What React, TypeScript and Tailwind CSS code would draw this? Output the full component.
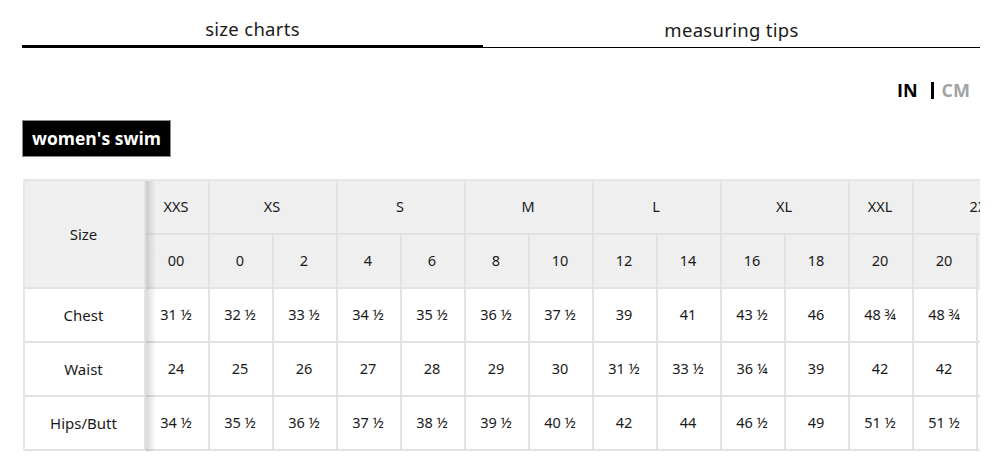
import React from "react";

const groups: { label: string; span: number }[] = [
  { label: "XXS", span: 1 },
  { label: "XS", span: 2 },
  { label: "S", span: 2 },
  { label: "M", span: 2 },
  { label: "L", span: 2 },
  { label: "XL", span: 2 },
  { label: "XXL", span: 1 },
  { label: "2X", span: 2 },
];

const sizes = ["00", "0", "2", "4", "6", "8", "10", "12", "14", "16", "18", "20", "20", ""];

const rows: { label: string; values: string[] }[] = [
  {
    label: "Chest",
    values: ["31 ½", "32 ½", "33 ½", "34 ½", "35 ½", "36 ½", "37 ½", "39", "41", "43 ½", "46", "48 ¾", "48 ¾", ""],
  },
  {
    label: "Waist",
    values: ["24", "25", "26", "27", "28", "29", "30", "31 ½", "33 ½", "36 ¼", "39", "42", "42", ""],
  },
  {
    label: "Hips/Butt",
    values: ["34 ½", "35 ½", "36 ½", "37 ½", "38 ½", "39 ½", "40 ½", "42", "44", "46 ½", "49", "51 ½", "51 ½", ""],
  },
];

const spanClass: Record<number, string> = {
  1: "col-span-1",
  2: "col-span-2",
};

export default function App() {
  return (
    <div className="w-[1000px] h-[473px] bg-white pl-[22px] pr-[20px] font-['Noto_Sans',sans-serif] text-[#1a1a1a] overflow-hidden">
      {/* Tabs */}
      <div className="flex border-b border-black">
        <div className="w-[461px] text-center pt-[17px] pb-[4px] leading-[24px] text-[18.5px] border-b-[3px] border-black -mb-px tracking-[0.3px]">
          size charts
        </div>
        <div className="flex-1 text-center pt-[18px] pb-[5px] leading-[24px] text-[18.5px] tracking-[0.3px]">
          measuring tips
        </div>
      </div>

      {/* Units */}
      <div className="mt-[30px] h-[24px] flex justify-end items-center pr-[10px] font-['Open_Sans',sans-serif] font-bold text-[18px] leading-[24px]">
        <span className="text-black">IN</span>
        <span className="ml-[13px] mr-[8px] w-[3px] h-[17px] bg-black inline-block" />
        <span className="text-[#a3a3a3]">CM</span>
      </div>

      {/* Category badge */}
      <div className="mt-[18px] w-[149px] h-[37px] bg-black border border-[#8a8a8a] flex items-center justify-center text-white font-bold text-[17.5px] font-['Open_Sans',sans-serif]">
        women's swim
      </div>

      {/* Table */}
      <div className="relative mt-[22px] ml-px w-[957px] overflow-hidden">
        <div className="grid w-max grid-cols-[121px_repeat(14,64px)] auto-rows-[54px] border-t-2 border-l-2 border-[#e6e6e6] text-[14.5px]">
          <div className="row-span-2 bg-[#efefef] border-r-2 border-b-2 border-[#e2e2e2] flex items-center justify-center pr-[2px] text-[15px]">
            Size
          </div>
          {groups.map((g) => (
            <div
              key={g.label}
              className={`${spanClass[g.span]} bg-[#efefef] border-r-2 border-b-2 border-[#e2e2e2] flex items-center justify-center pr-[2px]`}
            >
              {g.label === "2X" ? <span className="pl-[4px]">{g.label}</span> : g.label}
            </div>
          ))}
          {sizes.map((s, i) => (
            <div
              key={"s" + i}
              className="bg-[#efefef] border-r-2 border-b-2 border-[#e2e2e2] flex items-center justify-center pr-[2px]"
            >
              {s}
            </div>
          ))}
          {rows.map((r) => (
            <React.Fragment key={r.label}>
              <div className="bg-white border-r-2 border-b-2 border-[#e2e2e2] flex items-center justify-center pr-[2px] text-[15px]">
                {r.label}
              </div>
              {r.values.map((v, i) => (
                <div
                  key={r.label + i}
                  className="bg-white border-r-2 border-b-2 border-[#e2e2e2] flex items-center justify-center pr-[2px]"
                >
                  {v}
                </div>
              ))}
            </React.Fragment>
          ))}
        </div>
        <div className="absolute top-[2px] bottom-0 left-[123px] w-[10px] bg-linear-to-r from-black/15 to-transparent pointer-events-none" />
      </div>
    </div>
  );
}
